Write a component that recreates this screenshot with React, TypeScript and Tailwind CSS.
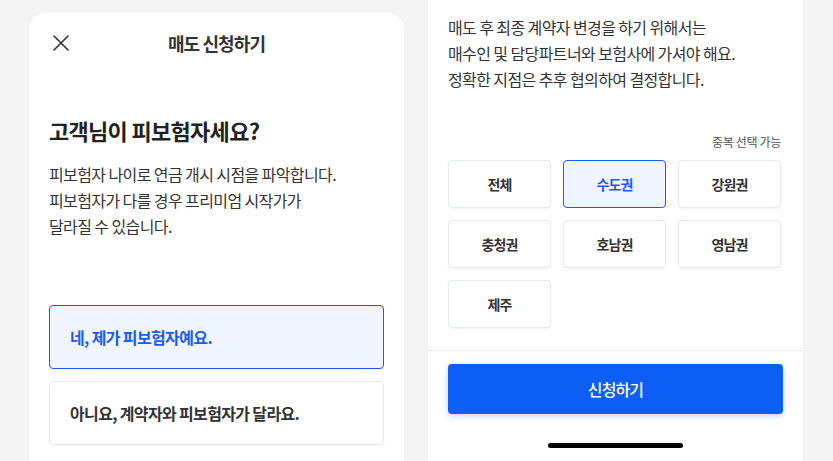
import React from "react";

const font = { fontFamily: '"Noto Sans CJK KR", "Noto Sans", sans-serif' };

export default function App() {
  const regions = ["전체", "수도권", "강원권", "충청권", "호남권", "영남권", "제주"];
  return (
    <div className="w-[833px] h-[461px] bg-[#f4f4f4] flex gap-[24px] pl-[29px] overflow-hidden" style={font}>
      {/* Left card */}
      <div className="w-[375px] mt-[13px] h-[448px] bg-white rounded-t-[16px] flex flex-col px-[20px]">
        <div className="relative h-[60px] flex items-center justify-center">
          <svg className="absolute left-[4px] top-[22px]" width="16" height="16" viewBox="0 0 16 16">
            <path d="M1 1 L15 15 M15 1 L1 15" stroke="#333" strokeWidth="1.6" strokeLinecap="round" />
          </svg>
          <span className="text-[18px] font-semibold text-[#333] tracking-[-0.9px]">매도 신청하기</span>
        </div>
        <h1 className="mt-[41px] text-[22px] leading-[32px] font-bold text-[#222] tracking-[-0.7px]">고객님이 피보험자세요?</h1>
        <p className="mt-[15px] text-[16px] leading-[26px] text-[#333] tracking-[-0.6px]">
          피보험자 나이로 연금 개시 시점을 파악합니다.
          <br />
          피보험자가 다를 경우 프리미엄 시작가가
          <br />
          달라질 수 있습니다.
        </p>
        <div className="mt-[66px] flex flex-col gap-[12px]">
          <div className="h-[64px] rounded-[4px] border border-[#1a5cf0] bg-[#f0f5ff] flex items-center px-[20px]">
            <span className="text-[16px] font-bold text-[#1a5cf0] tracking-[-0.63px]">네, 제가 피보험자예요.</span>
          </div>
          <div className="h-[64px] rounded-[4px] border border-[#e6e9ef] bg-white flex items-center px-[20px] shadow-[0_1px_3px_rgba(0,0,0,0.04)]">
            <span className="text-[16px] font-bold text-[#333] tracking-[-0.65px]">아니요, 계약자와 피보험자가 달라요.</span>
          </div>
        </div>
      </div>

      {/* Right card */}
      <div className="w-[375px] h-[461px] bg-white flex flex-col">
        <div className="px-[20px] pt-[14px]">
          <p className="text-[16px] leading-[26px] text-[#333] tracking-[-0.6px]">
            매도 후 최종 계약자 변경을 하기 위해서는
            <br />
            매수인 및 담당파트너와 보험사에 가셔야 해요.
            <br />
            정확한 지점은 추후 협의하여 결정합니다.
          </p>
          <div className="mt-[41px] w-[333px] flex justify-end">
            <span className="text-[12px] leading-[18px] text-[#555] tracking-[-0.33px]">중복 선택 가능</span>
          </div>
          <div className="mt-[9px] w-[333px] grid grid-cols-3 gap-[12px]">
            {regions.map((r) => {
              const sel = r === "수도권";
              return (
                <div
                  key={r}
                  className={
                    sel
                      ? "h-[48px] rounded-[4px] border border-[#1a5cf0] bg-[#f0f5ff] flex items-center justify-center"
                      : "h-[48px] rounded-[4px] border border-[#e6e9ef] bg-white flex items-center justify-center shadow-[0_1px_3px_rgba(0,0,0,0.05)]"
                  }
                >
                  <span
                    className={
                      sel
                        ? "text-[14px] font-bold text-[#1a5cf0] tracking-[-0.8px]"
                        : "text-[14px] font-bold text-[#333] tracking-[-0.8px]"
                    }
                  >
                    {r}
                  </span>
                </div>
              );
            })}
          </div>
        </div>
        <div className="mt-[22px] border-t border-[#e6ecf5]" />
        <div className="px-[20px] pt-[13px]">
          <button className="w-[335px] h-[50px] rounded-[4px] bg-[#0d5ef5] text-white text-[16px] font-medium tracking-[-0.9px] shadow-[0_2px_6px_rgba(13,94,245,0.25)]">
            신청하기
          </button>
        </div>
        <div className="mt-[29px] flex justify-center">
          <div className="w-[135px] h-[5px] rounded-full bg-black" />
        </div>
      </div>
    </div>
  );
}
